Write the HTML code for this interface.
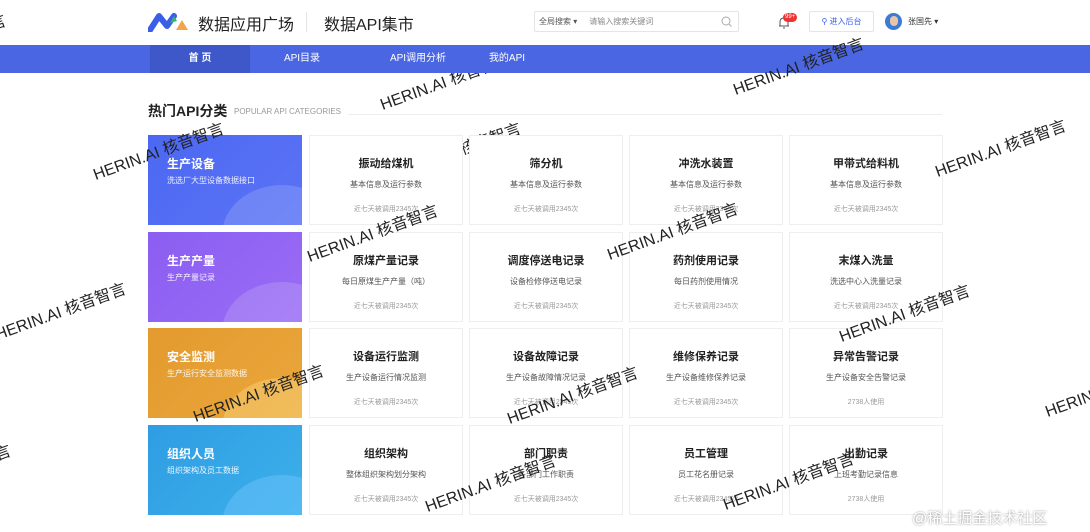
<!DOCTYPE html>
<html><head><meta charset="utf-8"><style>
*{margin:0;padding:0;box-sizing:border-box}
html,body{width:1090px;height:532px;overflow:hidden}
body{background:#fff;position:relative;font-family:"Liberation Sans","Noto Sans CJK SC",sans-serif;color:#333}
#w{position:absolute;left:0;top:0;width:1090px;height:532px;overflow:hidden}
.abs{position:absolute}
.nav{position:absolute;left:0;top:45px;width:1090px;height:28px;background:#4b66e2;z-index:3}
.nav .it{position:absolute;top:0;height:28px;line-height:28px;color:#fff;font-size:10px;text-align:center;width:100px}
.tile{position:absolute;left:148px;width:154px;height:90px;overflow:hidden;color:#fff;z-index:2}
.tile h3{position:absolute;left:19px;top:20px;font-size:12px;font-weight:bold}
.tile p{position:absolute;left:19px;top:40px;font-size:8px;opacity:.9}
.tile .c{position:absolute;right:-40px;bottom:-60px;width:120px;height:100px;border-radius:50%;background:rgba(255,255,255,.15)}
.card{position:absolute;width:154px;height:90px;border:1px solid #eee;background:#fff;text-align:center;z-index:2}
.card h4{margin-top:19px;font-size:11px;font-weight:bold;color:#222}
.card .s{margin-top:8px;font-size:8px;color:#555}
.card .n{margin-top:14px;font-size:7px;color:#999}
.wm{position:absolute;font-size:16px;color:#222;transform:rotate(-20deg);white-space:nowrap;width:160px;text-align:center;margin-left:-80px;margin-top:-10px;z-index:5}
.lo{z-index:1}
</style></head><body><div id="w">
<svg class="abs" style="left:148px;top:12px" width="42" height="20" viewBox="0 0 42 20">
<path d="M2 18 L11 4 L19 14 L26 4" fill="none" stroke="#3b5ee8" stroke-width="6" stroke-linejoin="round" stroke-linecap="round"/>
<path d="M22 11 L26 4 L29 9Z" fill="#3cb46e"/>
<path d="M28 18 L34 8 L40 18Z" fill="#f0a64b"/>
</svg>
<div class="abs" style="left:198px;top:11px;font-size:16px;color:#222">数据应用广场</div>
<div class="abs" style="left:306px;top:12px;width:1px;height:20px;background:#e5e5e5"></div>
<div class="abs" style="left:324px;top:11px;font-size:16px;color:#222">数据API集市</div>
<div class="abs" style="left:534px;top:11px;width:205px;height:21px;border:1px solid #e5e5e5;border-radius:2px;font-size:8px;line-height:19px;color:#555">
<span style="margin-left:4px">全局搜索 ▾</span><span style="margin-left:12px;color:#888">请输入搜索关键词</span>
<svg class="abs" style="right:6px;top:4px" width="11" height="11"><circle cx="5" cy="5" r="4" fill="none" stroke="#aaa" stroke-width="1"/><path d="M8 8L10.5 10.5" stroke="#aaa"/></svg></div>
<svg class="abs" style="left:778px;top:16px" width="12" height="13"><path d="M2 10 L2 6 Q2 2 6 2 Q10 2 10 6 L10 10Z M1 10H11 M5 12H7" fill="none" stroke="#555" stroke-width="1"/></svg>
<div class="abs" style="left:783px;top:13px;background:#e33;color:#fff;font-size:6px;border-radius:5px;padding:0 2px;line-height:9px">99+</div>
<div class="abs" style="left:809px;top:11px;width:65px;height:21px;border:1px solid #e5e5e5;border-radius:2px;font-size:8px;line-height:19px;color:#3b5ee8;text-align:center">⚲ 进入后台</div>
<div class="abs" style="left:885px;top:13px;width:17px;height:17px;border-radius:50%;background:#3a7bd5;overflow:hidden"><div style="margin:3px auto 0;width:8px;height:10px;border-radius:4px;background:#e8c4a8"></div></div>
<div class="abs" style="left:908px;top:16px;font-size:8px;color:#333">张国先 ▾</div>
<div class="nav">
<div class="it" style="left:150px;background:#3f58c9;font-weight:bold">首 页</div>
<div class="it" style="left:252px">API目录</div>
<div class="it" style="left:368px">API调用分析</div>
<div class="it" style="left:457px">我的API</div>
</div>
<div class="abs" style="left:148px;top:101px;font-size:14px;font-weight:bold;color:#222">热门API分类</div>
<div class="abs" style="left:234px;top:107px;font-size:8px;color:#999">POPULAR API CATEGORIES</div>
<div class="abs" style="left:348px;top:114px;width:594px;height:1px;background:#eee"></div>

<div class="tile" style="top:135px;background:linear-gradient(135deg,#4c68f2,#5b73f5)"><h3>生产设备</h3><p>洗选厂大型设备数据接口</p><div class="c"></div></div>
<div class="tile" style="top:232px;background:linear-gradient(135deg,#8b5ef2,#9a6cf5)"><h3>生产产量</h3><p>生产产量记录</p><div class="c"></div></div>
<div class="tile" style="top:328px;background:linear-gradient(135deg,#e39a2e,#eaa73c)"><h3>安全监测</h3><p>生产运行安全监测数据</p><div class="c" style="background:rgba(255,230,150,.35)"></div></div>
<div class="tile" style="top:425px;background:linear-gradient(135deg,#2f9de3,#3cb0ea)"><h3>组织人员</h3><p>组织架构及员工数据</p><div class="c" style="background:rgba(120,200,255,.4)"></div></div>

<div class="card" style="left:309px;top:135px"><h4>振动给煤机</h4><div class="s">基本信息及运行参数</div><div class="n">近七天被调用2345次</div></div>
<div class="card" style="left:469px;top:135px"><h4>筛分机</h4><div class="s">基本信息及运行参数</div><div class="n">近七天被调用2345次</div></div>
<div class="card" style="left:629px;top:135px"><h4>冲洗水装置</h4><div class="s">基本信息及运行参数</div><div class="n">近七天被调用2345次</div></div>
<div class="card" style="left:789px;top:135px"><h4>甲带式给料机</h4><div class="s">基本信息及运行参数</div><div class="n">近七天被调用2345次</div></div>

<div class="card" style="left:309px;top:232px"><h4>原煤产量记录</h4><div class="s">每日原煤生产产量（吨）</div><div class="n">近七天被调用2345次</div></div>
<div class="card" style="left:469px;top:232px"><h4>调度停送电记录</h4><div class="s">设备检修停送电记录</div><div class="n">近七天被调用2345次</div></div>
<div class="card" style="left:629px;top:232px"><h4>药剂使用记录</h4><div class="s">每日药剂使用情况</div><div class="n">近七天被调用2345次</div></div>
<div class="card" style="left:789px;top:232px"><h4>末煤入洗量</h4><div class="s">洗选中心入洗量记录</div><div class="n">近七天被调用2345次</div></div>

<div class="card" style="left:309px;top:328px"><h4>设备运行监测</h4><div class="s">生产设备运行情况监测</div><div class="n">近七天被调用2345次</div></div>
<div class="card" style="left:469px;top:328px"><h4>设备故障记录</h4><div class="s">生产设备故障情况记录</div><div class="n">近七天被调用2345次</div></div>
<div class="card" style="left:629px;top:328px"><h4>维修保养记录</h4><div class="s">生产设备维修保养记录</div><div class="n">近七天被调用2345次</div></div>
<div class="card" style="left:789px;top:328px"><h4>异常告警记录</h4><div class="s">生产设备安全告警记录</div><div class="n">2738人使用</div></div>

<div class="card" style="left:309px;top:425px"><h4>组织架构</h4><div class="s">整体组织架构划分架构</div><div class="n">近七天被调用2345次</div></div>
<div class="card" style="left:469px;top:425px"><h4>部门职责</h4><div class="s">各部门工作职责</div><div class="n">近七天被调用2345次</div></div>
<div class="card" style="left:629px;top:425px"><h4>员工管理</h4><div class="s">员工花名册记录</div><div class="n">近七天被调用2345次</div></div>
<div class="card" style="left:789px;top:425px"><h4>出勤记录</h4><div class="s">上班考勤记录信息</div><div class="n">2738人使用</div></div>

<div class="wm" style="left:158px;top:148px">HERIN.AI 核音智言</div>
<div class="wm" style="left:372px;top:230px">HERIN.AI 核音智言</div>
<div class="wm" style="left:672px;top:228px">HERIN.AI 核音智言</div>
<div class="wm" style="left:1000px;top:145px">HERIN.AI 核音智言</div>
<div class="wm" style="left:798px;top:63px">HERIN.AI 核音智言</div>
<div class="wm lo" style="left:455px;top:148px">HERIN.AI 核音智言</div>
<div class="wm lo" style="left:445px;top:78px">HERIN.AI 核音智言</div>
<div class="wm" style="left:60px;top:308px">HERIN.AI 核音智言</div>
<div class="wm" style="left:904px;top:310px">HERIN.AI 核音智言</div>
<div class="wm" style="left:258px;top:390px">HERIN.AI 核音智言</div>
<div class="wm" style="left:572px;top:392px">HERIN.AI 核音智言</div>
<div class="wm" style="left:1110px;top:385px">HERIN.AI 核音智言</div>
<div class="wm" style="left:490px;top:480px">HERIN.AI 核音智言</div>
<div class="wm" style="left:788px;top:478px">HERIN.AI 核音智言</div>
<div class="wm" style="left:-55px;top:470px">HERIN.AI 核音智言</div>
<div class="wm" style="left:-60px;top:40px">HERIN.AI 核音智言</div>
<div class="abs" style="left:912px;top:507px;font-size:15px;color:#fff;text-shadow:0 0 2px #888;z-index:6">@稀土掘金技术社区</div>
</div></body></html>
